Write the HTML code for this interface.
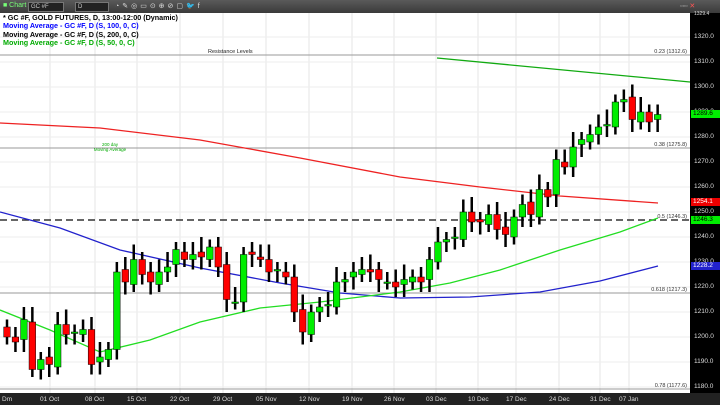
<!DOCTYPE html>
<html><head><meta charset="utf-8"><style>
body{margin:0;width:720px;height:405px;overflow:hidden;background:#fff;font-family:"Liberation Sans",sans-serif}
#top{position:absolute;left:0;top:0;width:720px;height:13px;background:linear-gradient(#5a5a5a,#3a3a3a);}
.t{position:absolute;font-size:7px;color:#ddd;top:2px}
.box{position:absolute;top:2px;height:8px;background:#222;border:1px solid #777;color:#ccc;font-size:6px;line-height:8px;padding-left:2px}
#leg{position:absolute;left:3px;top:14px;font-size:7.2px;font-weight:bold;line-height:8.4px}
#ax{position:absolute;left:690px;top:13px;width:30px;height:380px;background:#000}
#bot{position:absolute;left:0;top:393px;width:720px;height:12px;background:#222}
.yl{position:absolute;left:694px;font-size:6.5px;color:#ddd}
.xl{position:absolute;top:396px;font-size:6.5px;color:#ddd}
.tag{position:absolute;left:691px;width:29px;height:8px;font-size:6.5px;line-height:8px;padding-left:2px;box-sizing:border-box}
</style></head><body>
<div id="top">
<span class="t" style="left:3px;color:#7f7">■ Chart</span>
<div class="box" style="left:28px;width:32px">GC #F</div>
<div class="box" style="left:75px;width:30px">D</div>
<span class="t" style="left:115px;letter-spacing:3px">◔✎◎▭⊙⊕⊘▢🐦f</span>
<span class="t" style="left:680px;color:#aaa">▫▫▫ <span style="color:#f55">✕</span></span>
</div>
<svg id="ch" width="690" height="380" style="position:absolute;left:0;top:13px"></svg>
<div id="leg">
<div style="color:#000">* GC #F, GOLD FUTURES, D, 13:00-12:00 (Dynamic)</div>
<div style="color:#00f">Moving Average - GC #F, D (S, 100, 0, C)</div>
<div style="color:#000">Moving Average - GC #F, D (S, 200, 0, C)</div>
<div style="color:#0a0">Moving Average - GC #F, D (S, 50, 0, C)</div>
</div>
<div id="ax"></div>
<div id="bot"></div>
<script>
const s=document.getElementById('ch');
const Y=p=>362-(p-1190)*2.5-13;
let h='';
const dx=[50,95,137,180,223,266,309,352,394,436,478,516,559,600,629];
const dl=['01 Oct','08 Oct','15 Oct','22 Oct','29 Oct','05 Nov','12 Nov','19 Nov','26 Nov','03 Dec','10 Dec','17 Dec','24 Dec','31 Dec','07 Jan'];
for(const x of dx)h+=`<line x1="${x}" y1="0" x2="${x}" y2="380" stroke="#e6e6e6" stroke-width="1"/>`;
for(let p=1180;p<=1320;p+=10)h+=`<line x1="0" y1="${Y(p)}" x2="690" y2="${Y(p)}" stroke="#eee"/>`;
const lv=[[55,'0.23 (1312.6)','#999',0],[148,'0.38 (1275.8)','#999',0],[220,'0.5 (1246.3)','#333',1],[293,'0.618 (1217.3)','#999',0],[389,'0.78 (1177.6)','#999',0]];
for(const[y,t,c,d]of lv){h+=`<line x1="0" y1="${y-13}" x2="690" y2="${y-13}" stroke="${c}" stroke-width="${d?1.5:1}" ${d?'stroke-dasharray="7,4"':''}/><text x="687" y="${y-15}" font-size="5.5" text-anchor="end" fill="#333">${t}</text>`;}
h+=`<text x="208" y="${53-13}" font-size="5.5" fill="#222">Resistance Levels</text>`;
h+=`<text x="110" y="${146-13}" font-size="4.5" fill="#0a0" text-anchor="middle">200 day</text><text x="110" y="${151-13}" font-size="4.5" fill="#0a0" text-anchor="middle">Moving Average</text>`;
h+=`<line x1="437" y1="${58-13}" x2="690" y2="${82-13}" stroke="#1a1" stroke-width="1.3"/>`;
const pl=(pts,c)=>`<polyline fill="none" stroke="${c}" stroke-width="1.3" points="${pts.map(p=>p[0]+','+(p[1]-13)).join(' ')}"/>`;
h+=pl([[0,123],[100,128],[200,140],[300,158],[400,177],[480,187],[560,196],[658,203]],'#e22');
h+=pl([[0,212],[60,228],[120,250],[200,268],[280,283],[340,293],[400,298],[470,297],[540,292],[600,281],[658,266]],'#22c');
h+=pl([[0,310],[50,330],[100,352],[150,340],[200,322],[260,308],[320,302],[400,292],[450,283],[500,270],[560,250],[620,232],[658,218]],'#2d2');
const C=[1200,1198,1207,1187,1191,1189,1205,1201,1202,1203,1189,1192,1195,1226,1222,1231,1225,1222,1226,1228,1235,1231,1233,1232,1236,1228,1215,1214,1233,1233,1231,1226,1227,1224,1210,1202,1210,1212,1213,1222,1223,1226,1227,1226,1223,1222,1220,1223,1224,1222,1231,1238,1239,1240,1250,1246,1246,1249,1243,1241,1248,1253,1249,1259,1256,1271,1268,1276,1279,1281,1284,1285,1294,1295,1287,1290,1286,1289];
let prev=1205;
C.forEach((c,i)=>{const x=7+i*8.45;const o=prev+(i%3-1);const hi=Math.max(o,c)+3+(i%4);const lo=Math.min(o,c)-3-(i%3);
h+=`<line x1="${x}" y1="${Y(hi)}" x2="${x}" y2="${Y(lo)}" stroke="#000" stroke-width="2.5"/>`;
const t=Y(Math.max(o,c)),b=Y(Math.min(o,c));
h+=`<rect x="${x-3.3}" y="${t}" width="6.6" height="${Math.max(b-t,1.5)}" fill="${c>=o?'#0e0':'#f00'}" stroke="#000" stroke-width="0.5"/>`;prev=c;});
s.innerHTML=h;
let a='';
for(let p=1180;p<=1320;p+=10)a+=`<div class="yl" style="top:${Y(p)+13-4}px">${p}.0</div>`;
a+=`<div class="yl" style="top:11px;font-size:5px">1329.4</div>`;
a+=`<div class="tag" style="top:110px;background:#0e0;color:#000">1289.6</div>`;
a+=`<div class="tag" style="top:198px;background:#e00;color:#fff">1254.1</div>`;
a+=`<div class="tag" style="top:216px;background:#0e0;color:#000">1246.3</div>`;
a+=`<div class="tag" style="top:262px;background:#22c;color:#fff">1228.2</div>`;
dl.forEach((t,i)=>a+=`<div class="xl" style="left:${dx[i]-10}px">${t}</div>`);
a+=`<div class="xl" style="left:2px">Dm</div>`;
document.body.insertAdjacentHTML('beforeend',a);
</script>
</body></html>
